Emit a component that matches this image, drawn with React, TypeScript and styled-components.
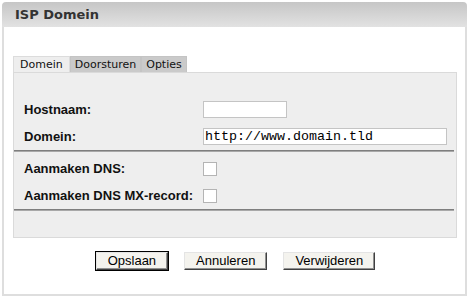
import React from 'react';
import styled, { createGlobalStyle } from 'styled-components';

const GlobalStyle = createGlobalStyle`
    body {
        margin: 0;
        background: #ffffff;
        font-family: "Liberation Sans", Arial, sans-serif;
    }
`;

const tabs = ['Domein', 'Doorsturen', 'Opties'];

const App = () => {
    return (
        <Page>
            <GlobalStyle />
            <Box>
                <Header>ISP Domein</Header>
                <Body>
                    <TabBar>
                        {tabs.map((t, i) => (
                            <Tab key={t} $active={i === 0}>
                                {t}
                            </Tab>
                        ))}
                    </TabBar>
                    <Panel>
                        <Rows>
                            <Row>
                                <Label>Hostnaam:</Label>
                                <TextInput type="text" $width={84} defaultValue="" />
                            </Row>
                            <Row>
                                <Label>Domein:</Label>
                                <TextInput type="text" $width={244} defaultValue="http://www.domain.tld" />
                            </Row>
                        </Rows>
                        <Separator />
                        <Rows $top={3}>
                            <Row>
                                <Label>Aanmaken DNS:</Label>
                                <Check type="checkbox" />
                            </Row>
                            <Row>
                                <Label>Aanmaken DNS MX-record:</Label>
                                <Check type="checkbox" />
                            </Row>
                        </Rows>
                        <Separator />
                    </Panel>
                    <Actions>
                        <Button type="button" $primary>Opslaan</Button>
                        <Button type="button">Annuleren</Button>
                        <Button type="button">Verwijderen</Button>
                    </Actions>
                </Body>
            </Box>
        </Page>
    );
};

export default App;

// Styled Components
const Page = styled.div`
    padding: 2px 0 0 2px;
`;

const Box = styled.div`
    width: 465px;
`;

const Header = styled.div`
    height: 25px;
    display: flex;
    align-items: center;
    padding-left: 13px;
    border-radius: 4px 4px 0 0;
    background: linear-gradient(to bottom, #c6c6c6 0%, #e2e2e2 100%);
    font-family: "DejaVu Sans", Verdana, sans-serif;
    font-weight: 700;
    font-size: 13px;
    color: #333333;
`;

const Body = styled.div`
    height: 269px;
    box-sizing: border-box;
    border: 2px solid #dedede;
    border-top: none;
    padding: 29px 8px 0 9px;
`;

const TabBar = styled.div`
    display: flex;
    height: 16px;
`;

const Tab = styled.div<{ $active?: boolean }>`
    height: 16px;
    box-sizing: border-box;
    padding: 0 ${(p) => (p.$active ? 6 : 4)}px;
    display: flex;
    align-items: center;
    border: 1px solid ${(p) => (p.$active ? '#dcdcdc' : '#c4c4c4')};
    border-bottom: none;
    background: ${(p) => (p.$active ? '#eeeeee' : '#cacaca')};
    font-family: "DejaVu Sans", Verdana, sans-serif;
    font-size: 11px;
    color: #111111;
`;

const Panel = styled.div`
    height: 166px;
    box-sizing: border-box;
    border: 1px solid #dadada;
    background: #eeeeee;
    padding-top: 23px;
`;

const Rows = styled.div<{ $top?: number }>`
    padding-left: 10px;
    padding-top: ${(p) => p.$top ?? 0}px;
`;

const Row = styled.div`
    display: flex;
    align-items: center;
    height: 27px;
`;

const Label = styled.div`
    width: 179px;
    font-weight: 700;
    font-size: 13px;
    color: #111111;
`;

const TextInput = styled.input<{ $width: number }>`
    width: ${(p) => p.$width}px;
    height: 17px;
    box-sizing: border-box;
    margin: 0;
    padding: 0 1px;
    border: 1px solid #c4c4c4;
    background: #ffffff;
    font-family: "Liberation Mono", "Courier New", monospace;
    font-size: 13.33px;
    color: #000000;
    outline: none;
`;

const Check = styled.input`
    appearance: none;
    width: 14px;
    height: 14px;
    margin: 0;
    border: 1px solid #b4b4b4;
    background: #ffffff;
`;

const Separator = styled.div`
    height: 0;
    margin-right: 2px;
    border-top: 1px solid #7e7e7e;
    border-bottom: 1px solid #a8a8a8;
`;

const Actions = styled.div`
    display: flex;
    justify-content: center;
    gap: 16px;
    margin-top: 14px;
    padding-left: 1px;
`;

const Button = styled.button<{ $primary?: boolean }>`
    height: 18px;
    box-sizing: border-box;
    padding: 0 11px;
    margin: 0;
    background: #f4f3ee;
    border: 1px solid;
    border-color: #e4e4e4 #404040 #404040 #e4e4e4;
    box-shadow: inset -1px -1px 0 #909090
        ${(p) => (p.$primary ? ', 0 0 0 1px #000000' : '')};
    font-family: "Liberation Sans", Arial, sans-serif;
    font-size: 13px;
    line-height: 14px;
    color: #000000;
`;
